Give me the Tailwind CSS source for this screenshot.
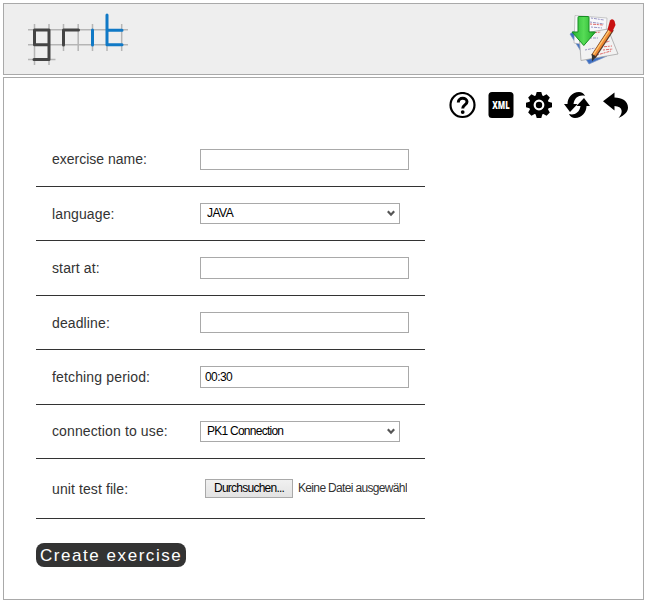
<!DOCTYPE html>
<html lang="en">
<head>
<meta charset="utf-8">
<title>Create exercise</title>
<script src="https://cdn.jsdelivr.net/npm/@tailwindcss/browser@4"></script>
</head>
<body class="bg-white p-[3px] font-['Liberation_Sans',Arial,sans-serif] text-sm text-[#333]">
<header class="flex h-[72px] w-[641px] items-start justify-between border border-[#a9a9a9] bg-[#eee]">
  <svg class="mt-[6px] ml-[21px] h-[60px] w-[105px]" viewBox="25 10 105 60" fill="none">
    <g stroke="#b5b5b5" stroke-width="1.5">
      <path d="M28 29.8H128M28 44.7H128M28 59.6H55.500M34.500 24V65M49 24V65M63.500 24V51M78.200 24V51M92.500 24V51M107 24V51M121.700 24V51"/>
    </g>
    <path d="M49 44.800H34.500V30H49V59.500H34M63.500 45V30H78.500" stroke="#444" stroke-width="3" stroke-linecap="round" stroke-linejoin="round"/>
    <path d="M92.500 30V45M107 15V44.800H122M107 30.200H122" stroke="#1079c6" stroke-width="3" stroke-linecap="round" stroke-linejoin="round"/>
  </svg>
  <svg class="mt-[8px] mr-[23px] h-[54px] w-[52px]" viewBox="567 12 52 54">
    <defs><linearGradient id="arrow"><stop stop-color="#26b533"/><stop offset=".5" stop-color="#57dc56"/><stop offset="1" stop-color="#1eaa29"/></linearGradient></defs>
    <path d="M569 34L578 28 606 56 588 64Z" fill="#3e70c4" stroke="#7892c0" stroke-width=".7"/>
    <path d="M574 15.500L606 18 604 48 573 43Z" fill="#f8f8fb" stroke="#aaa" stroke-width=".6"/>
    <path d="M578 34L607 29 617 54 580 60.500Z" fill="#f2f2f2" stroke="#a5a5a5" stroke-width=".8"/>
    <g fill="none" stroke-width="1" stroke-dasharray="2 1 3 .8">
      <path d="M590 18L603 20M589 22L603 24M590 27L601 28M584 50L594 48M589 38L597 38" stroke="#9997c4"/>
      <path d="M589 24L602 25M590 33L600 32M602 43L609 41M600 47L611 46M602 50L612 49M596 55L610 51" stroke="#e06a68"/>
    </g>
    <path d="M577 17.500Q577 16.500 578 16.500H587Q588 16.500 588 17.500V32H594.500L582.800 45.500 571 32H577Z" fill="url(#arrow)" stroke="#168d22" stroke-width="1" stroke-linejoin="round"/>
    <path d="M592.500 56.500L610.500 29" stroke="#5a3a25" stroke-width="5.400"/>
    <path d="M593 55L609.500 30" stroke="#f08a35" stroke-width="3.800"/>
    <path d="M592.500 54.500L608.500 30" stroke="#ffd07a" stroke-width="1.200"/>
    <path d="M606.500 29.500L609 20.500Q611.500 18 613.500 21L614.500 25 611 32.500Z" fill="#c91212"/>
    <path d="M590.800 54L595 57 591 61.500Z" fill="#333"/>
  </svg>
</header>
<main class="mt-[2px] h-[523px] w-[641px] border border-[#a9a9a9] px-[32px]">
  <nav class="-mr-[18px] flex h-[55px] justify-end gap-[12px] pt-[14px] text-black">
    <svg class="h-[27px] w-[27px]" viewBox="0 0 27 27"><circle cx="13.500" cy="13" r="12" fill="none" stroke="currentColor" stroke-width="2.200"/><path d="M9.300 10.400C9.300 4.900 18 5.200 18 9.700C18 13 13.700 12.800 13.700 16.500" fill="none" stroke="currentColor" stroke-width="3"/><circle cx="13.700" cy="20.100" r="1.900"/></svg>
    <svg class="h-[26px] w-[26px]" viewBox="0 0 26 26"><rect x=".5" width="25" height="26" rx="3.500"/><text x="4.200" y="16.800" textLength="17.500" lengthAdjust="spacingAndGlyphs" class="fill-white font-['Open_Sans',sans-serif] text-[10px] font-extrabold">XML</text></svg>
    <svg class="h-[26px] w-[26px]" viewBox="-13 -13 26 26"><circle r="7.700" fill="none" stroke="currentColor" stroke-width="4.600"/><circle r="3.200"/><g><path id="tooth" d="M-3.600-8.500L-2.300-13H2.300L3.600-8.500Z"/><use href="#tooth" transform="rotate(45)"/><use href="#tooth" transform="rotate(90)"/><use href="#tooth" transform="rotate(135)"/><use href="#tooth" transform="rotate(180)"/><use href="#tooth" transform="rotate(225)"/><use href="#tooth" transform="rotate(270)"/><use href="#tooth" transform="rotate(315)"/></g></svg>
    <svg class="h-[26px] w-[26px]" viewBox="0 0 26 26"><path id="turn" d="M20 6L26 14H22.500C22.500 20 18 26 11 26C8.500 26 6 24.500 5 22C10 23.500 15.500 21 16.500 14H12.500Z"/><use href="#turn" transform="rotate(180 13 13)"/></svg>
    <svg class="ml-[1px] h-[26px] w-[26px]" viewBox="0 0 26 26"><path d="M0 9.200L11.500 .5V5.500C19 5.500 25 9 25 15.500C25 20 21 23.500 15.500 26C20.500 20.500 20 14.500 11.500 14V18.500Z"/></svg>
  </nav>
  <form class="w-[389px]">
    <div class="flex h-[54px] border-b border-[#333] pt-[16px] pl-[16px]"><label class="w-[148px] leading-[20px]">exercise name:</label><div class="h-[21px] w-[209px] border border-[#a9a9a9]"></div></div>
    <div class="flex h-[54px] border-b border-[#333] pt-[16px] pl-[16px]"><label class="w-[148px] leading-[22px] tracking-[0.120px]">language:</label><div class="flex h-[21px] w-[200px] items-center justify-between border border-[#a9a9a9] pr-[4px] pl-[6px] text-[12px] tracking-[-0.500px] text-black"><span>JAVA</span><svg class="h-[7px] w-[8px]" viewBox="0 0 8 7" fill="none"><path d="M.8 1.200L4 4.700 7.200 1.200" stroke="#555" stroke-width="2.200"/></svg></div></div>
    <div class="flex h-[55px] border-b border-[#333] pt-[16px] pl-[16px]"><label class="w-[148px] leading-[22px] tracking-[0.120px]">start at:</label><div class="h-[22px] w-[209px] border border-[#a9a9a9]"></div></div>
    <div class="flex h-[54px] border-b border-[#333] pt-[16px] pl-[16px]"><label class="w-[148px] leading-[22px] tracking-[0.120px]">deadline:</label><div class="h-[21px] w-[209px] border border-[#a9a9a9]"></div></div>
    <div class="flex h-[55px] border-b border-[#333] pt-[16px] pl-[16px]"><label class="w-[148px] leading-[22px] tracking-[0.150px]">fetching period:</label><div class="h-[22px] w-[209px] border border-[#a9a9a9] pl-[4px] text-[12px] leading-[20px] tracking-[-0.600px] text-black">00:30</div></div>
    <div class="flex h-[54px] border-b border-[#333] pt-[16px] pl-[16px]"><label class="w-[148px] leading-[20px] tracking-[0.120px]">connection to use:</label><div class="flex h-[21px] w-[200px] items-center justify-between border border-[#a9a9a9] pr-[4px] pl-[6px] text-[12px] tracking-[-0.750px] text-black"><span>PK1 Connection</span><svg class="h-[7px] w-[8px]" viewBox="0 0 8 7" fill="none"><path d="M.8 1.200L4 4.700 7.200 1.200" stroke="#555" stroke-width="2.200"/></svg></div></div>
    <div class="flex h-[60px] border-b border-[#333] pt-[20px] pl-[16px]"><label class="w-[153px] leading-[20px] tracking-[0.100px]">unit test file:</label><div class="h-[19px] w-[88px] border border-[#a9a9a9] bg-gradient-to-b from-[#f0f0f0] to-[#e3e3e3] pl-[8px] text-[12px] leading-[17px] tracking-[-0.750px] text-black">Durchsuchen...</div><div class="ml-[5px] h-[19px] w-[109px] overflow-hidden text-[12px] leading-[19px] tracking-[-0.660px] whitespace-nowrap">Keine Datei ausgewählt</div></div>
    <button type="button" class="mt-[24px] block h-[24px] w-[150px] rounded-[8px] bg-[#333] pl-[4px] text-left text-[17px] leading-[25px] tracking-[1.550px] whitespace-nowrap text-white">Create exercise</button>
  </form>
</main>
</body>
</html>
